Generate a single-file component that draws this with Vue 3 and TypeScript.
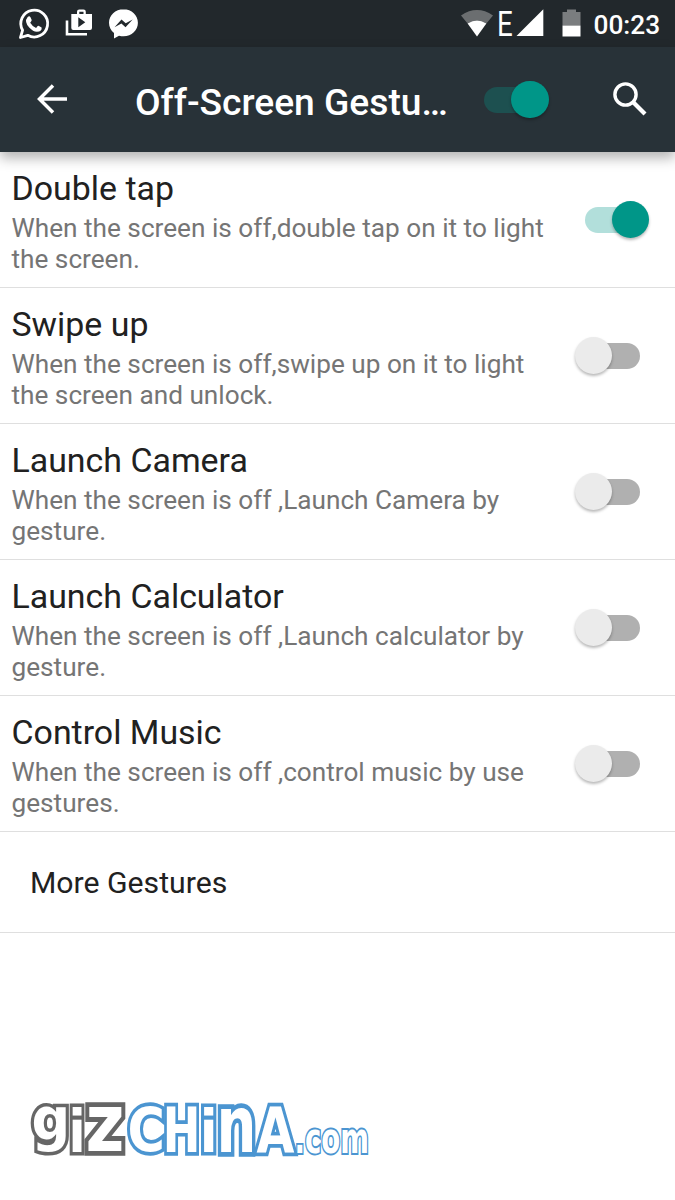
<script setup lang="ts">
import { ref } from 'vue'

interface Gesture {
  title: string
  summary: string[]
  on: boolean
}

interface LogoGlyph {
  ch: string
  x: number
  y: number
  sx: number
  sy: number
  tone: 'grey' | 'blue' | 'blue small'
}

const enabled = ref(true)

const gestures = ref<Gesture[]>([
  { title: 'Double tap', summary: ['When the screen is off,double tap on it to light', 'the screen.'], on: true },
  { title: 'Swipe up', summary: ['When the screen is off,swipe up on it to light', 'the screen and unlock.'], on: false },
  { title: 'Launch Camera', summary: ['When the screen is off ,Launch Camera by', 'gesture.'], on: false },
  { title: 'Launch Calculator', summary: ['When the screen is off ,Launch calculator by', 'gesture.'], on: false },
  { title: 'Control Music', summary: ['When the screen is off ,control music by use', 'gestures.'], on: false },
])

// Each letter is stretched to the wordmark's common height
const logo: LogoGlyph[] = [
  { ch: 'g', x: 0.5, y: 36.5, sx: 0.54, sy: 0.59, tone: 'grey' },
  { ch: 'i', x: 37.5, y: 48.5, sx: 0.5, sy: 0.595, tone: 'grey' },
  { ch: 'z', x: 54.5, y: 48, sx: 0.67, sy: 0.81, tone: 'grey' },
  { ch: 'C', x: 96.5, y: 48, sx: 0.51, sy: 0.61, tone: 'blue' },
  { ch: 'H', x: 131.7, y: 48.5, sx: 0.45, sy: 0.62, tone: 'blue' },
  { ch: 'i', x: 168.7, y: 48.5, sx: 0.52, sy: 0.595, tone: 'blue' },
  { ch: 'n', x: 185.5, y: 48.5, sx: 0.56, sy: 0.78, tone: 'blue' },
  { ch: 'A', x: 225.5, y: 48.5, sx: 0.49, sy: 0.62, tone: 'blue' },
  { ch: '.com', x: 263.5, y: 50, sx: 0.276, sy: 0.43, tone: 'blue small' },
]
</script>

<template>
  <div class="screen">
    <div class="status">
      <svg class="status-icons" width="140" height="47" viewBox="0 0 140 47">
        <path d="M20.500 37.500 L22.600 30.200 A13.400 13.400 0 1 1 27.800 35.300 Z" fill="none" stroke="#fff" stroke-width="2.800" stroke-linejoin="round" />
        <path d="M27.500 17.200 q1.800-2 3 0 l1.200 2.900 q.2.800-1.500 2.600 q2.100 3.700 5.900 5.200 q1.700-2.300 2.400-2.100 l3.100 1.600 q.8 4-4.800 4.400 q-3.600-.2-7.600-4.400 q-5.300-5.800-1.700-10.200z" fill="#fff" />
        <path d="M67 20.500 V34.300 H87" fill="none" stroke="#fff" stroke-width="2.600" />
        <path fill-rule="evenodd" fill="#fff" d="M71.300 14 h5.700 v-2.300 q0-2.300 2.300-2.300 h4.200 q2.300 0 2.300 2.300 v2.300 h6.200 v14 q0 2-2 2 h-16.700 q-2 0-2-2z M79.300 14 h4.200 v-2.200 h-4.200z M78.300 17.300 v10 l7-5z" />
        <path d="M123.500 9.200 c-8.200 0-14.500 6-14.500 13.600 c0 4.200 1.900 7.700 5 10.200 v5.400 l5-2.700 c10.400 2.700 18.900-4.200 18.900-12.900 c0-7.600-6.200-13.600-14.400-13.600z" fill="#fff" />
        <path d="M114.500 27.300 l7-7.700 4.200 3.600 7-3.700 -7.200 7.700 -4.100-3.700z" fill="#22282c" />
      </svg>
      <div class="status-right">
        <svg width="146" height="47" viewBox="0 0 146 47">
          <path d="M21 15.400 Q37 4.800 53 15.400 L46.400 23.500 Q37 17.500 27.600 23.500z" fill="#6b6e70" />
          <path d="M27.600 23.600 Q37 17.600 46.400 23.600 L37 36.500z" fill="#fff" />
          <path d="M76.500 36 L103.300 9.300 V36z" fill="#fff" />
          <path d="M122.500 12 H127 V9.500 H136 V12 H140.500 V25.500 H122.500z" fill="#7a7d7f" />
          <path d="M122.500 25.500 H140.500 V36.500 H122.500z" fill="#fff" />
          <text class="network" transform="translate(57 36) scale(.77 1)">E</text>
        </svg>
        <span class="clock">00:23</span>
      </div>
    </div>

    <header class="toolbar">
      <svg class="back" width="34" height="34" viewBox="0 0 34 34">
        <path d="M32 17 H4 M18 3.500 L4.500 17 L18 30.500" fill="none" stroke="#fff" stroke-width="3.500" />
      </svg>
      <h1>Off-Screen Gestu…</h1>
      <button class="switch dark" :class="{ on: enabled }" aria-label="Off-screen gestures" @click="enabled = !enabled">
        <span class="thumb"></span>
      </button>
      <svg class="search" width="36" height="36" viewBox="0 0 36 36">
        <circle cx="13.500" cy="13.500" r="10.600" fill="none" stroke="#fff" stroke-width="3.400" />
        <path d="M21 21 L33 33" stroke="#fff" stroke-width="4.200" />
      </svg>
    </header>

    <main>
      <section v-for="g in gestures" :key="g.title" class="row">
        <div class="copy">
          <h2>{{ g.title }}</h2>
          <p><span v-for="line in g.summary" :key="line">{{ line }}</span></p>
        </div>
        <button class="switch" :class="{ on: g.on }" :aria-label="g.title" @click="g.on = !g.on">
          <span class="thumb"></span>
        </button>
      </section>
      <div class="more">More Gestures</div>
    </main>

    <footer>
      <svg width="360" height="120" viewBox="-2 -40 360 120">
        <text
          v-for="(l, i) in logo"
          :key="i"
          class="glyph"
          :class="l.tone"
          :transform="`translate(${l.x} ${l.y}) scale(${l.sx} ${l.sy})`"
        >{{ l.ch }}</text>
      </svg>
    </footer>
  </div>
</template>

<style>
body {
  margin: 0;
  background: #fff;
}
</style>

<style scoped>
.screen {
  width: 675px;
  height: 1200px;
  display: flex;
  flex-direction: column;
  overflow: hidden;
  background: #fff;
  font-family: Roboto, "Noto Sans", sans-serif;
}
.status {
  flex: none;
  height: 47px;
  display: flex;
  justify-content: space-between;
  background: #22282c;
}
.status-right {
  display: flex;
  width: 235px;
}
.network {
  font: 400 36px Roboto, sans-serif;
  fill: #fff;
}
.clock {
  margin-left: 7.500px;
  color: #fff;
  font-size: 26.250px;
  font-weight: 500;
  line-height: 50px;
}
.toolbar {
  position: relative;
  flex: none;
  height: 105px;
  display: flex;
  align-items: center;
  background: #283238;
  box-shadow: 0 6px 12px rgba(0, 0, 0, 0.3);
}
.back {
  margin: 0 0 1px 35px;
}
h1 {
  width: 345px;
  margin: 4px 0 0 66px;
  color: #fff;
  font-size: 37.200px;
  font-weight: 500;
  line-height: 44px;
  white-space: nowrap;
}
.search {
  margin: 0 0 1px 73px;
}
.switch {
  position: relative;
  flex: none;
  width: 55px;
  height: 26px;
  padding: 0;
  border: 0;
  border-radius: 13px;
  background: #b0b0b0;
}
.thumb {
  position: absolute;
  top: -6px;
  left: -10px;
  width: 37.500px;
  height: 37.500px;
  border-radius: 50%;
  background: #ebebeb;
  box-shadow: 0 2px 3px rgba(0, 0, 0, 0.28);
}
.switch.on {
  background: #b2dfdb;
}
.switch.on .thumb {
  left: 27px;
  background: #009688;
}
.switch.dark {
  margin-left: 4px;
}
.switch.dark.on {
  background: #1d5050;
}
main {
  flex: none;
}
.row {
  display: flex;
  align-items: center;
  height: 135px;
  padding: 0 35.500px 0 11.500px;
  border-bottom: 1px solid #dfdfdf;
}
.copy {
  flex: 1;
  align-self: flex-start;
  padding-top: 17px;
}
h2 {
  margin: 0 0 4px;
  color: #212121;
  font-size: 33.900px;
  font-weight: 400;
  line-height: 39px;
}
p {
  margin: 0;
  padding-top: 1px;
  color: #757575;
  font-size: 26.200px;
  line-height: 31px;
}
p span {
  display: block;
  white-space: nowrap;
}
.more {
  height: 100px;
  padding-left: 30px;
  border-bottom: 1px solid #dfdfdf;
  color: #212121;
  font-size: 30.200px;
  line-height: 102px;
}
footer {
  margin: 130px 0 0 29px;
}
.glyph {
  font: 700 100px "DejaVu Sans", sans-serif;
  fill: #fff;
  stroke-width: 12px;
  stroke-linejoin: miter;
  paint-order: stroke;
}
.grey {
  stroke: #666;
}
.blue {
  stroke: #4b95d1;
}
.small {
  stroke-width: 9px;
}
</style>
